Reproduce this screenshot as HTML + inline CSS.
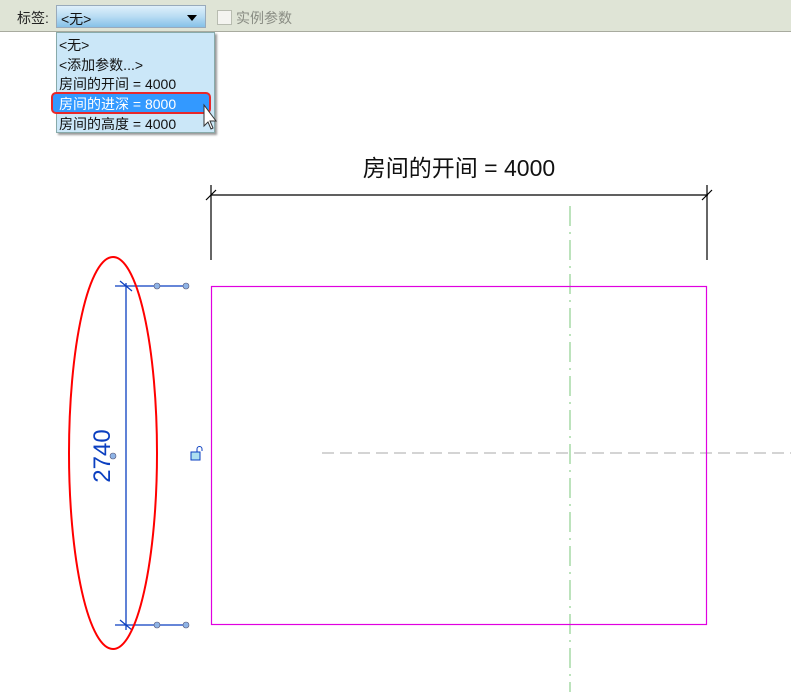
<!DOCTYPE html>
<html><head><meta charset="utf-8"><style>
body{margin:0;width:791px;height:692px;overflow:hidden;background:#fff;font-family:"Liberation Sans","Noto Sans CJK SC",sans-serif;position:relative}
.tb{position:absolute;left:0;top:0;width:791px;height:31px;background:#dfe4d6;border-bottom:1px solid #a8ab9f}
.lbl{position:absolute;left:17px;top:8px;font-size:14px;color:#222}
.cb{position:absolute;left:56px;top:5px;width:150px;height:23px;background:linear-gradient(#dff0fb,#b9dcf3 50%,#86c1e8);border:1px solid #9ab;box-sizing:border-box;font-size:14px;padding:3px 0 0 4px;color:#111}
.cb:after{content:"";position:absolute;right:8px;top:9px;border:5px solid transparent;border-top:6px solid #000;border-bottom:0}
.chk{position:absolute;left:217px;top:10px;width:13px;height:13px;border:1px solid #b8bcb0;background:#f4f4f0}
.ck{position:absolute;left:236px;top:8px;font-size:14px;color:#8a8d84}
.dd{position:absolute;left:56px;top:32px;width:159px;height:101px;background:#cbe7f8;border:1px solid #8aa;box-sizing:border-box;box-shadow:2px 2px 2px #999}
.it{position:absolute;left:2px;font-size:14px;color:#111;white-space:nowrap}
.sel{position:absolute;left:-6px;top:59px;width:160px;height:22px;background:#3399ff;border:2px solid #e8282a;border-radius:5px;box-sizing:border-box}
</style></head><body>
<div class="tb"><span class="lbl">标签:</span><div class="cb">&lt;无&gt;</div><div class="chk"></div><span class="ck">实例参数</span></div>
<div class="dd">
<div class="sel"></div>
<div class="it" style="top:2px">&lt;无&gt;</div>
<div class="it" style="top:22px">&lt;添加参数...&gt;</div>
<div class="it" style="top:41px">房间的开间 = 4000</div>
<div class="it" style="top:61px;color:#fff">房间的进深 = 8000</div>
<div class="it" style="top:81px">房间的高度 = 4000</div>
</div>
<svg width="791" height="692" style="position:absolute;left:0;top:0;pointer-events:none">
<path d="M204 105 L204 126 L208 122 L211 129 L213 128 L210 121 L216 121 Z" fill="#fff" stroke="#333" stroke-width="1"/>
<text x="459" y="176" font-size="23" text-anchor="middle" font-family="Liberation Sans,Noto Sans CJK SC,sans-serif" fill="#111">房间的开间 = 4000</text>
<g stroke="#000" stroke-width="1.2" fill="none">
<line x1="211" y1="195" x2="708" y2="195"/>
<line x1="211" y1="185" x2="211" y2="260"/><line x1="707" y1="185" x2="707" y2="260"/>
<line x1="206" y1="200" x2="216" y2="190"/><line x1="702" y1="200" x2="712" y2="190"/>
</g>
<line x1="570" y1="206" x2="570" y2="692" stroke="#8fd090" stroke-width="1.2" stroke-dasharray="20,6,2,6"/>
<line x1="322" y1="453" x2="791" y2="453" stroke="#a8a8a8" stroke-width="1" stroke-dasharray="12,6"/>
<rect x="211.5" y="286.5" width="495" height="338" fill="none" stroke="#e000e0" stroke-width="1.2"/>
<g stroke="#0b3fc0" stroke-width="1.3" fill="none">
<line x1="126" y1="283" x2="126" y2="630"/>
<line x1="115" y1="286" x2="187" y2="286"/><line x1="115" y1="625" x2="187" y2="625"/>
<line x1="120" y1="281" x2="132" y2="291"/><line x1="120" y1="620" x2="132" y2="630"/>
</g>
<g fill="#8fb4e6" stroke="#557" stroke-width="0.6">
<circle cx="157" cy="286" r="3"/><circle cx="186" cy="286" r="3"/>
<circle cx="157" cy="625" r="3"/><circle cx="186" cy="625" r="3"/>
<circle cx="113" cy="456" r="3"/>
</g>
<text transform="translate(110,456) rotate(-90)" font-size="24" text-anchor="middle" fill="#0b3fc0" font-family="Liberation Sans,sans-serif">2740</text>
<rect x="191" y="452" width="9" height="8" fill="#aee0f0" stroke="#0b3fc0" stroke-width="1"/>
<path d="M197 452 v-3 a2.5 2.5 0 0 1 5 0 v2" fill="none" stroke="#0b3fc0" stroke-width="1"/>
<ellipse cx="113" cy="453" rx="44" ry="196" fill="none" stroke="#f00" stroke-width="2"/>
</svg>
</body></html>
